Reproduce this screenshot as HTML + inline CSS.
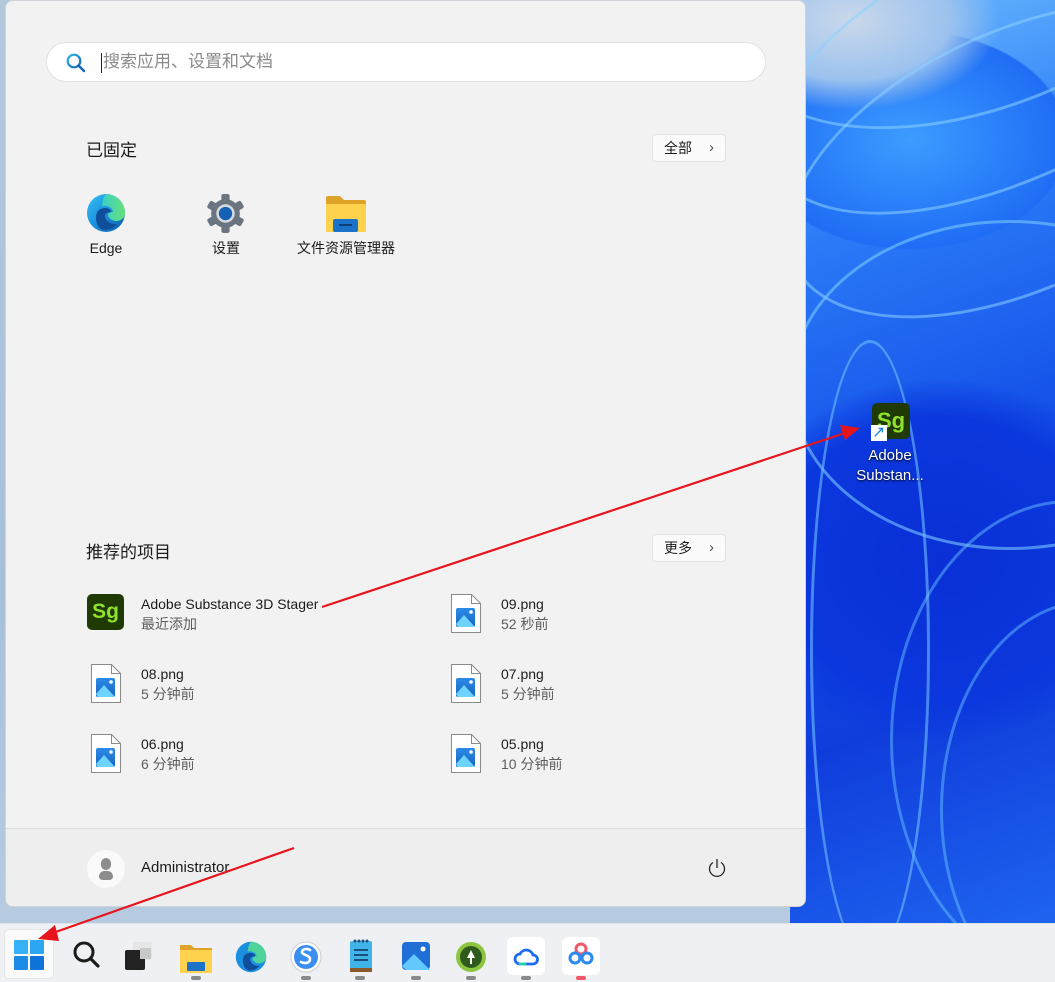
<!DOCTYPE html>
<html><head><meta charset="utf-8"><style>
*{margin:0;padding:0;box-sizing:border-box}
body{width:1055px;height:982px;overflow:hidden;position:relative;font-family:"Liberation Sans","Noto Sans CJK SC",sans-serif;color:#1b1b1b;
background:linear-gradient(180deg,#b4c8dc 0%,#a7c0da 60%,#b9cde2 100%)}
.wall{position:absolute;left:790px;top:0;width:265px;height:925px;overflow:hidden;
background:
radial-gradient(ellipse 200px 120px at 60px 20px,#c9d8ea 0%,#9cc2ef 50%,transparent 75%),
radial-gradient(ellipse 260px 180px at 120px 140px,#3d9cff 0%,#1f6df5 60%,transparent 61%),
radial-gradient(ellipse 300px 260px at 150px 560px,#0a2fd6 0%,#0b38de 55%,transparent 70%),
linear-gradient(160deg,#6fbfff 0%,#2a7af7 25%,#1450e8 50%,#0f3ddc 75%,#1f64ef 100%)}
.wall .s{position:absolute;border:3px solid rgba(140,210,255,.55);border-radius:50%}
.menu{position:absolute;left:5px;top:0;width:801px;height:907px;background:#f2f2f2;border-radius:8px;border:1px solid #d0d4d8;overflow:hidden}
.search{position:absolute;left:40px;top:41px;width:720px;height:40px;background:#fff;border:1px solid #e1e1e1;border-radius:20px}
.search .ph{position:absolute;left:56px;top:8px;font-size:17px;color:#8a8a8a;line-height:22px}
.search .cur{position:absolute;left:54px;top:10px;width:1px;height:20px;background:#222}
h3{position:absolute;font-size:17px;font-weight:normal;color:#1b1b1b}
.btn{position:absolute;width:74px;height:28px;background:#fbfbfb;border:1px solid #e3e3e3;border-radius:4px;font-size:14px;line-height:26px;padding-left:11px}
.btn span{position:absolute;right:11px;top:0;font-size:15px;color:#555}
.pin{position:absolute;text-align:center;font-size:14px;width:120px;line-height:18px}
.rec{position:absolute;font-size:14px;line-height:20px}
.rec .t2{color:#5d5d5d}
.fi{position:absolute}
.foot{position:absolute;left:0;top:827px;width:801px;height:80px;background:#eeeeee;border-top:1px solid #dcdcdc}
.task{position:absolute;left:0;top:923px;width:1055px;height:59px;background:#eef0f3;border-top:1px solid #dfe3e8}
.dot{position:absolute;top:52px;width:10px;height:4px;border-radius:2px;background:#8a8a8a}
</style></head><body>
<div class="wall">
<div class="s" style="left:-60px;top:-150px;width:500px;height:260px;transform:rotate(-20deg)"></div>
<div class="s" style="left:-40px;top:-60px;width:520px;height:240px;transform:rotate(-25deg)"></div>
<div class="s" style="left:-20px;top:30px;width:500px;height:260px;transform:rotate(-25deg)"></div>
<div class="s" style="left:0px;top:220px;width:440px;height:330px;border-color:rgba(120,200,255,.6)"></div>
<div class="s" style="left:100px;top:500px;width:360px;height:480px;border-color:rgba(100,190,255,.5)"></div>
<div class="s" style="left:150px;top:600px;width:300px;height:420px;border-color:rgba(100,190,255,.5)"></div>
<div class="s" style="left:20px;top:340px;width:120px;height:620px;border-color:rgba(110,190,255,.6)"></div>
</div>
<div style="position:absolute;left:872px;top:403px;width:38px;height:36px;background:#1f3a05;border-radius:5px;color:#8fe12c;font-weight:bold;font-size:22px;text-align:center;line-height:35px">Sg</div>
<div style="position:absolute;left:871px;top:425px;width:16px;height:16px;background:#fff;color:#1e88e5;font-size:13px;line-height:16px;text-align:center;font-weight:bold">↗</div>
<div style="position:absolute;left:845px;top:446px;width:90px;text-align:center;color:#fff;font-size:15px;line-height:20px;text-shadow:0 1px 2px #000">Adobe<br>Substan...</div>

<div class="menu">
 <div class="search">
  <svg style="position:absolute;left:19px;top:10px" width="20" height="20" viewBox="0 0 20 20"><defs><linearGradient id="sg" x1="0" y1="0" x2="1" y2="1"><stop offset="0" stop-color="#2bb8e0"/><stop offset="1" stop-color="#1565c0"/></linearGradient></defs><circle cx="8" cy="8" r="6.3" fill="none" stroke="url(#sg)" stroke-width="2.2"/><line x1="12.5" y1="12.5" x2="18" y2="18" stroke="#1565c0" stroke-width="2.4" stroke-linecap="round"/></svg>
  <div class="cur"></div><div class="ph">搜索应用、设置和文档</div>
 </div>
 <h3 style="left:80px;top:135px">已固定</h3>
 <div class="btn" style="left:646px;top:133px">全部<span>›</span></div>
 <svg style="position:absolute;left:80px;top:192px" width="40" height="40" viewBox="0 0 40 40"><defs><linearGradient id="eg" x1="0" y1="0" x2="1" y2="1"><stop offset="0" stop-color="#35c1f1"/><stop offset=".5" stop-color="#1b8fe0"/><stop offset="1" stop-color="#0c59a4"/></linearGradient><linearGradient id="eg2" x1="0" y1="0" x2="1" y2="0"><stop offset="0" stop-color="#3bd0c8"/><stop offset="1" stop-color="#66e07a"/></linearGradient></defs><circle cx="20" cy="20" r="19" fill="url(#eg)"/><path d="M20 1a19 19 0 0 1 19 19c0 5-4 8-9 8-4 0-8-3-8-6 0-2 3-3 5-3-1-5-6-7-11-6A19 19 0 0 1 20 1z" fill="url(#eg2)"/><path d="M10 24c0-6 4-9 9-9 4 0 6 2 6 4-3 0-6 1-6 4 0 5 6 9 12 8-3 4-8 6-12 6C13 37 10 31 10 24z" fill="#0e4e9a"/></svg>
 <div class="pin" style="left:40px;top:238px">Edge</div>
 <svg style="position:absolute;left:199px;top:192px" width="41" height="41" viewBox="0 0 40 40"><g fill="#6b7580"><circle cx="20" cy="20" r="14"/><g id="t"><rect x="16" y="1" width="8" height="9" rx="2"/><rect x="16" y="30" width="8" height="9" rx="2"/></g><use href="#t" transform="rotate(60 20 20)"/><use href="#t" transform="rotate(120 20 20)"/></g><circle cx="20" cy="20" r="9" fill="#d7dbe0"/><circle cx="20" cy="20" r="6.5" fill="#1461b5"/></svg>
 <div class="pin" style="left:160px;top:238px">设置</div>
 <svg style="position:absolute;left:319px;top:194px" width="41" height="37" viewBox="0 0 41 37"><path d="M1 3a2 2 0 0 1 2-2h12l4 4h20a2 2 0 0 1 2 2v28H1z" fill="#e0a32a"/><rect x="1" y="9" width="40" height="28" rx="1" fill="#ffd24d"/><rect x="8" y="24" width="25" height="13" rx="2" fill="#1a73c9"/><rect x="14" y="29" width="13" height="2" fill="#0b3f7a"/></svg>
 <div class="pin" style="left:280px;top:238px;width:120px">文件资源管理器</div>

 <h3 style="left:80px;top:537px">推荐的项目</h3>
 <div class="btn" style="left:646px;top:533px">更多<span>›</span></div>

 <div style="position:absolute;left:81px;top:593px;width:37px;height:36px;background:#1f3a05;border-radius:5px;color:#8fe12c;font-weight:bold;font-size:21px;text-align:center;line-height:36px">Sg</div>
 <div class="rec" style="left:135px;top:593px">Adobe Substance 3D Stager<br><span class="t2">最近添加</span></div>
 <div class="rec" style="left:495px;top:593px">09.png<br><span class="t2">52 秒前</span></div>
 <div class="rec" style="left:135px;top:663px">08.png<br><span class="t2">5 分钟前</span></div>
 <div class="rec" style="left:495px;top:663px">07.png<br><span class="t2">5 分钟前</span></div>
 <div class="rec" style="left:135px;top:733px">06.png<br><span class="t2">6 分钟前</span></div>
 <div class="rec" style="left:495px;top:733px">05.png<br><span class="t2">10 分钟前</span></div>

 <svg width="0" height="0" style="position:absolute"><defs><linearGradient id="pg" x1="0" y1="0" x2="0" y2="1"><stop offset="0" stop-color="#2d8ae8"/><stop offset="1" stop-color="#1766c2"/></linearGradient><g id="pf"><path d="M.5 .5h20l9 9v29H.5z" fill="#fff" stroke="#8a8a8a"/><path d="M20.5 .5v9h9" fill="none" stroke="#8a8a8a"/><rect x="5" y="14" width="19" height="19" rx="2" fill="url(#pg)"/><path d="M5 30l8-9 11 12H7z" fill="#6fd3ff"/><circle cx="20" cy="18" r="1.8" fill="#fff"/></g></defs></svg>
 <svg class="fi" style="left:85px;top:663px" width="30" height="40"><use href="#pf"/></svg>
 <svg class="fi" style="left:445px;top:593px" width="30" height="40"><use href="#pf"/></svg>
 <svg class="fi" style="left:445px;top:663px" width="30" height="40"><use href="#pf"/></svg>
 <svg class="fi" style="left:85px;top:733px" width="30" height="40"><use href="#pf"/></svg>
 <svg class="fi" style="left:445px;top:733px" width="30" height="40"><use href="#pf"/></svg>

 <div class="foot">
  <div style="position:absolute;left:81px;top:21px;width:38px;height:38px;border-radius:50%;background:#fafafa"></div>
  <div style="position:absolute;left:95px;top:29px;width:10px;height:12px;border-radius:5px;background:#8d8d8d"></div>
  <div style="position:absolute;left:93px;top:42px;width:14px;height:9px;border-radius:6px 6px 4px 4px;background:#8d8d8d"></div>
  <div style="position:absolute;left:135px;top:30px;font-size:15px">Administrator</div>
  <svg style="position:absolute;left:700px;top:28px" width="22" height="22" viewBox="0 0 22 22"><path d="M7 5.5A7.5 7.5 0 1 0 15 5.5" fill="none" stroke="#222" stroke-width="1.3"/><line x1="11" y1="2" x2="11" y2="11" stroke="#222" stroke-width="1.3"/></svg>
 </div>
</div>

<div class="task">
 <div style="position:absolute;left:4px;top:5px;width:50px;height:50px;background:#fafafa;border-radius:5px;border:1px solid #e5e5e5"></div>
 <svg style="position:absolute;left:13px;top:15px" width="32" height="32" viewBox="0 0 32 32"><rect x="1" y="1" width="14" height="14" rx="1" fill="#36b0f6"/><rect x="17" y="1" width="14" height="14" rx="1" fill="#2aa6f3"/><rect x="1" y="17" width="14" height="14" rx="1" fill="#1c8ce8"/><rect x="17" y="17" width="14" height="14" rx="1" fill="#0f73d9"/></svg>
 <svg style="position:absolute;left:72px;top:16px" width="30" height="30" viewBox="0 0 30 30"><circle cx="12" cy="12" r="9" fill="none" stroke="#1b1b1b" stroke-width="3"/><line x1="18.5" y1="18.5" x2="26" y2="26" stroke="#1b1b1b" stroke-width="3.2" stroke-linecap="round"/></svg>
 <div style="position:absolute;left:133px;top:18px;width:19px;height:18px;background:#e6e6e6;border-radius:2px"></div>
 <div style="position:absolute;left:125px;top:26px;width:20px;height:20px;background:#222;border-radius:2px"></div>
 <div style="position:absolute;left:140px;top:24px;width:11px;height:11px;background:#c8c8c8"></div>
 <svg style="position:absolute;left:179px;top:19px" width="34" height="30" viewBox="0 0 34 30"><path d="M1 2h11l3 3h18v25H1z" fill="#e0a32a"/><rect x="1" y="7" width="32" height="23" fill="#ffd24d"/><rect x="8" y="19" width="18" height="9" rx="1" fill="#1a73c9"/></svg>
 <div class="dot" style="left:191px"></div>
 <svg style="position:absolute;left:235px;top:17px" width="32" height="32" viewBox="0 0 40 40"><circle cx="20" cy="20" r="19" fill="#1b8fe0"/><path d="M20 1a19 19 0 0 1 19 19c0 5-4 8-9 8-4 0-8-3-8-6 0-2 3-3 5-3-1-5-6-7-11-6A19 19 0 0 1 20 1z" fill="#4fd39a"/><path d="M10 24c0-6 4-9 9-9 4 0 6 2 6 4-3 0-6 1-6 4 0 5 6 9 12 8-3 4-8 6-12 6C13 37 10 31 10 24z" fill="#0e4e9a"/></svg>
 <svg style="position:absolute;left:290px;top:17px" width="32" height="32" viewBox="0 0 32 32"><circle cx="16" cy="16" r="15" fill="#fff" stroke="#ccc"/><circle cx="16" cy="16" r="12" fill="#3b8ff0"/><path d="M20 9c-3-2-8-1-8 2s8 3 8 7-5 5-9 3" fill="none" stroke="#fff" stroke-width="2.6" stroke-linecap="round"/></svg>
 <div class="dot" style="left:301px"></div>
 <svg style="position:absolute;left:348px;top:14px" width="26" height="36" viewBox="0 0 26 36"><rect x="2" y="3" width="22" height="29" rx="2" fill="#40b4e8"/><rect x="2" y="30" width="22" height="4" fill="#8b5a2b"/><g fill="#1b4f7a"><rect x="6" y="11" width="14" height="2"/><rect x="6" y="16" width="14" height="2"/><rect x="6" y="21" width="14" height="2"/><circle cx="7" cy="3" r="1.5"/><circle cx="11" cy="3" r="1.5"/><circle cx="15" cy="3" r="1.5"/><circle cx="19" cy="3" r="1.5"/></g></svg>
 <div class="dot" style="left:355px"></div>
 <svg style="position:absolute;left:402px;top:18px" width="28" height="28" viewBox="0 0 28 28"><rect width="28" height="28" rx="4" fill="#1f6fd6"/><path d="M0 24l12-12 16 16H4z" fill="#62c8ff"/><circle cx="21" cy="7" r="2.5" fill="#fff"/></svg>
 <div class="dot" style="left:411px"></div>
 <svg style="position:absolute;left:455px;top:17px" width="32" height="32" viewBox="0 0 32 32"><circle cx="16" cy="16" r="15" fill="#8cc63f"/><circle cx="16" cy="16" r="11" fill="#2e5a1c"/><path d="M16 9l-4 8h3v6h2v-6h3z" fill="#fff"/></svg>
 <div class="dot" style="left:466px"></div>
 <div style="position:absolute;left:507px;top:13px;width:38px;height:38px;background:#fff;border-radius:6px"></div>
 <svg style="position:absolute;left:512px;top:18px" width="28" height="28" viewBox="0 0 28 28"><path d="M8 22a5 5 0 0 1 0-10 7 7 0 0 1 13 1 4.5 4.5 0 0 1 0 9h-9" fill="none" stroke="#1e6cf0" stroke-width="2.8" stroke-linecap="round"/><path d="M8 22h5" stroke="#1fd1a5" stroke-width="2.8" stroke-linecap="round"/></svg>
 <div class="dot" style="left:521px"></div>
 <div style="position:absolute;left:562px;top:13px;width:38px;height:38px;background:#fff;border-radius:6px"></div>
 <svg style="position:absolute;left:568px;top:17px" width="26" height="26" viewBox="0 0 26 26"><circle cx="13" cy="8" r="5" fill="none" stroke="#f0596a" stroke-width="3"/><circle cx="7" cy="17" r="5" fill="none" stroke="#2b8af0" stroke-width="3"/><circle cx="19" cy="17" r="5" fill="none" stroke="#2b8af0" stroke-width="3"/></svg>
 <div class="dot" style="left:576px;background:#f0596a"></div>
</div>

<svg style="position:absolute;left:0;top:0" width="1055" height="982">
 <line x1="322" y1="607" x2="848" y2="432" stroke="#e8141c" stroke-width="2.2"/>
 <polygon points="860,428 840,425 845,440" fill="#e8141c"/>
 <line x1="294" y1="848" x2="50" y2="934" stroke="#e8141c" stroke-width="2.2"/>
 <polygon points="38,939 55,925 59,941" fill="#e8141c"/>
</svg>
</body></html>
